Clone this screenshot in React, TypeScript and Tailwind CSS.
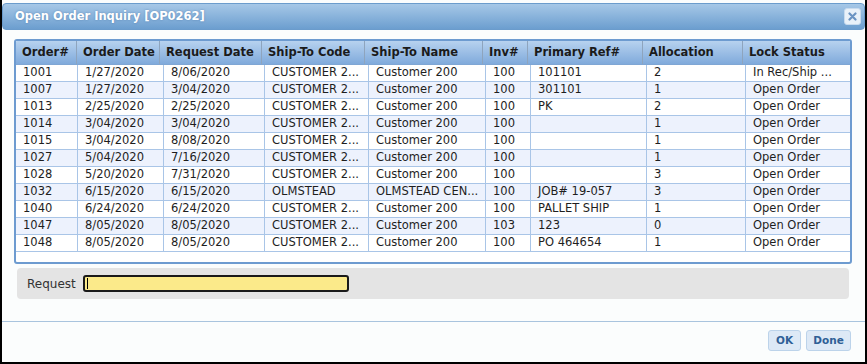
const headCols = [61, 83, 102, 103, 118, 45, 115, 100, 107];
const bodyCols = [62, 86, 101, 104, 117, 45, 116, 99, 104];

const headers = [
  "Order#",
  "Order Date",
  "Request Date",
  "Ship-To Code",
  "Ship-To Name",
  "Inv#",
  "Primary Ref#",
  "Allocation",
  "Lock Status",
];

const rows = [
  ["1001", "1/27/2020", "8/06/2020", "CUSTOMER 2...", "Customer 200", "100", "101101", "2", "In Rec/Ship ..."],
  ["1007", "1/27/2020", "3/04/2020", "CUSTOMER 2...", "Customer 200", "100", "301101", "1", "Open Order"],
  ["1013", "2/25/2020", "2/25/2020", "CUSTOMER 2...", "Customer 200", "100", "PK", "2", "Open Order"],
  ["1014", "3/04/2020", "3/04/2020", "CUSTOMER 2...", "Customer 200", "100", "", "1", "Open Order"],
  ["1015", "3/04/2020", "8/08/2020", "CUSTOMER 2...", "Customer 200", "100", "", "1", "Open Order"],
  ["1027", "5/04/2020", "7/16/2020", "CUSTOMER 2...", "Customer 200", "100", "", "1", "Open Order"],
  ["1028", "5/20/2020", "7/31/2020", "CUSTOMER 2...", "Customer 200", "100", "", "3", "Open Order"],
  ["1032", "6/15/2020", "6/15/2020", "OLMSTEAD", "OLMSTEAD CEN...", "100", "JOB# 19-057", "3", "Open Order"],
  ["1040", "6/24/2020", "6/24/2020", "CUSTOMER 2...", "Customer 200", "100", "PALLET SHIP", "1", "Open Order"],
  ["1047", "8/05/2020", "8/05/2020", "CUSTOMER 2...", "Customer 200", "103", "123", "0", "Open Order"],
  ["1048", "8/05/2020", "8/05/2020", "CUSTOMER 2...", "Customer 200", "100", "PO 464654", "1", "Open Order"],
];

export default function App() {
  return (
    <div className="w-[867px] h-[364px] bg-[#fbfdfd] border-x-2 border-b-2 border-black flex flex-col font-['DejaVu_Sans',sans-serif] overflow-hidden">
      {/* Title bar */}
      <div className="mt-[3px] h-[27px] rounded-[4px] border border-[#6b9ccc] bg-gradient-to-b from-[#a6c8e7] to-[#6c9ecf] flex items-center justify-between pl-[12px] pr-[3px]">
        <span className="text-white font-bold text-[11.5px] [text-shadow:0_0_2px_rgba(60,100,150,0.6)]">
          Open Order Inquiry [OP0262]
        </span>
        <div className="w-[17px] h-[17px] rounded-[3px] border border-[#c8dbee] bg-[#e9f1f9] flex items-center justify-center">
          <svg width="9" height="9" viewBox="0 0 9 9">
            <path d="M1.5 1.5 L7.5 7.5 M7.5 1.5 L1.5 7.5" stroke="#6a93c2" strokeWidth="2.2" strokeLinecap="round" />
          </svg>
        </div>
      </div>

      {/* Grid */}
      <div className="mt-[9px] ml-[12px] w-[838px] h-[225px] border-2 border-[#6d9bd0] rounded-[3px] overflow-hidden bg-white">
        <div className="flex h-[24px] bg-gradient-to-b from-[#b7d2ef] to-[#80aadb] border-b border-[#7fa6d4]">
          {headers.map((h, i) => (
            <div
              key={h}
              style={{ width: headCols[i] }}
              className={`shrink-0 flex items-center pl-[6px] text-[11.5px] font-bold text-[#1b1b1b] whitespace-nowrap overflow-hidden ${
                i < headers.length - 1 ? "border-r border-[#8ea4bd]" : ""
              }`}
            >
              {h}
            </div>
          ))}
        </div>
        {rows.map((r, ri) => (
          <div
            key={r[0]}
            className={`flex h-[17px] border-b border-[#a9c5e7] ${ri % 2 === 1 ? "bg-[#edf2fd]" : "bg-white"}`}
          >
            {r.map((c, ci) => (
              <div
                key={ci}
                style={{ width: bodyCols[ci] }}
                className={`shrink-0 flex items-center pl-[7px] text-[11.5px] text-[#1e1e1e] whitespace-nowrap overflow-hidden ${
                  ci < r.length - 1 ? "border-r border-[#a9c5e7]" : ""
                }`}
              >
                {c}
              </div>
            ))}
          </div>
        ))}
      </div>

      {/* Request panel */}
      <div className="mt-[4px] ml-[15px] w-[832px] h-[31px] rounded-[4px] bg-[#e4e4e4] flex items-center">
        <span className="w-[66px] pl-[10px] text-[12px] text-[#333]">Request</span>
        <div className="w-[266px] h-[17px] rounded-[3px] border-2 border-[#1a1a1a] bg-[#fbea8a] flex items-center pl-[2px]">
          <span className="w-px h-[11px] bg-black" />
        </div>
      </div>

      {/* Footer */}
      <div className="mt-[22px] border-t border-[#a9c4de]" />
      <div className="mt-[8px] flex justify-end gap-[5px] pr-[14px]">
        <button className="w-[33px] h-[21px] rounded-[3px] border border-[#bcd3ea] bg-[#dde9f6] text-[10.5px] font-bold text-[#2f5f96]">
          OK
        </button>
        <button className="w-[45px] h-[21px] rounded-[3px] border border-[#bcd3ea] bg-[#dde9f6] text-[10.5px] font-bold text-[#2f5f96]">
          Done
        </button>
      </div>
    </div>
  );
}
